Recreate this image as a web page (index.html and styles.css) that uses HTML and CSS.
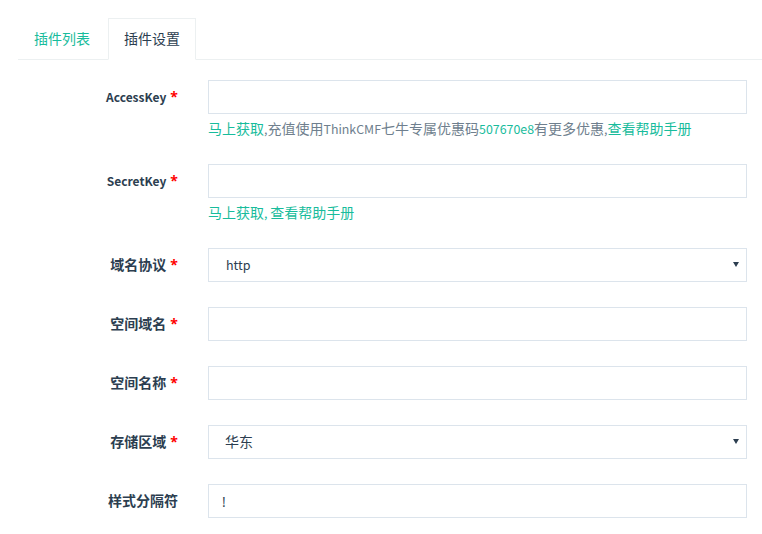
FILE: index.html
```html
<!DOCTYPE html>
<html lang="zh-CN">
<head>
<meta charset="utf-8">
<title>插件设置</title>
<link rel="stylesheet" href="styles.css">
</head>
<body>
<div class="page">
  <ul class="tabs">
    <li class="tab"><a class="tab-link">插件列表</a></li>
    <li class="tab active"><a class="tab-link">插件设置</a></li>
  </ul>
  <form class="form">
    <div class="group">
      <label class="label"><span class="en en-label">AccessKey</span><span class="req">*</span></label>
      <div class="field">
        <input class="input" type="text" value="">
        <p class="help"><a class="link">马上获取</a><span class="en">,</span>充值使用<span class="en">ThinkCMF</span>七牛专属优惠码<a class="link en">507670e8</a>有更多优惠<span class="en">,</span><a class="link">查看帮助手册</a></p>
      </div>
    </div>
    <div class="group">
      <label class="label"><span class="en en-label">SecretKey</span><span class="req">*</span></label>
      <div class="field">
        <input class="input" type="text" value="">
        <p class="help"><a class="link">马上获取</a><span class="link en">, </span><a class="link">查看帮助手册</a></p>
      </div>
    </div>
    <div class="group">
      <label class="label">域名协议<span class="req">*</span></label>
      <div class="field">
        <div class="select-wrap">
          <select class="input select en-input"><option>http</option><option>https</option></select>
          <span class="caret"></span>
        </div>
      </div>
    </div>
    <div class="group">
      <label class="label">空间域名<span class="req">*</span></label>
      <div class="field"><input class="input" type="text" value=""></div>
    </div>
    <div class="group">
      <label class="label">空间名称<span class="req">*</span></label>
      <div class="field"><input class="input" type="text" value=""></div>
    </div>
    <div class="group">
      <label class="label">存储区域<span class="req">*</span></label>
      <div class="field">
        <div class="select-wrap">
          <select class="input select"><option>华东</option><option>华北</option><option>华南</option><option>北美</option></select>
          <span class="caret"></span>
        </div>
      </div>
    </div>
    <div class="group">
      <label class="label">样式分隔符</label>
      <div class="field"><input class="input input-sep" type="text" value="!"></div>
    </div>
  </form>
</div>
</body>
</html>
```

FILE: styles.css
```css
* { box-sizing: border-box; }
html, body { margin: 0; padding: 0; background: #fff; }
body {
  font-family: "Open Sans", "Noto Sans CJK SC", sans-serif;
  font-size: 14px;
  line-height: 20px;
  color: #2c3e50;
}
.en {
  font-family: "Noto Sans CJK SC", "Open Sans", sans-serif;
  font-size: 12.4px;
}
.en-label { font-size: 12px; }
.page { padding: 18px 0 0 18px; }
.tabs {
  list-style: none;
  margin: 0;
  padding: 0;
  display: flex;
  border-bottom: 1px solid #ecf0f1;
}
.tab { margin-bottom: -1px; margin-right: 2px; }
.tab-link {
  display: block;
  padding: 10px 15px;
  border: 1px solid transparent;
  color: #18bc9c;
  cursor: pointer;
}
.tab.active .tab-link {
  color: #2c3e50;
  border-color: #ecf0f1 #ecf0f1 transparent;
  background: #fff;
}
.form { margin-top: 20px; margin-left: -18px; }
.group {
  display: grid;
  grid-template-columns: 178px 539px;
  column-gap: 30px;
  margin-bottom: 25px;
}
.label {
  text-align: right;
  font-weight: bold;
  padding-top: 7px;
  color: #2c3e50;
}
.req { color: #f00; margin-left: 4px; }
.input {
  display: block;
  width: 100%;
  height: 34px;
  margin: 0;
  padding: 6px 16px;
  border: 1px solid #dce4ec;
  border-radius: 0;
  font: inherit;
  color: #2c3e50;
  background: #fff;
  outline: none;
}
.en-input {
  font-family: "Noto Sans CJK SC", "Open Sans", sans-serif;
  font-size: 12.5px;
  padding-left: 17px;
}
.input-sep { padding-left: 13px; }
.select-wrap { position: relative; }
.select { appearance: none; -webkit-appearance: none; }
.caret {
  position: absolute;
  right: 8px;
  top: 14px;
  width: 0;
  height: 0;
  border-left: 3px solid transparent;
  border-right: 3px solid transparent;
  border-top: 5px solid #2c3e50;
  pointer-events: none;
}
.help { margin: 5px 0 0; color: #6f7f8e; }
.link { color: #18bc9c; text-decoration: none; cursor: pointer; }
```
